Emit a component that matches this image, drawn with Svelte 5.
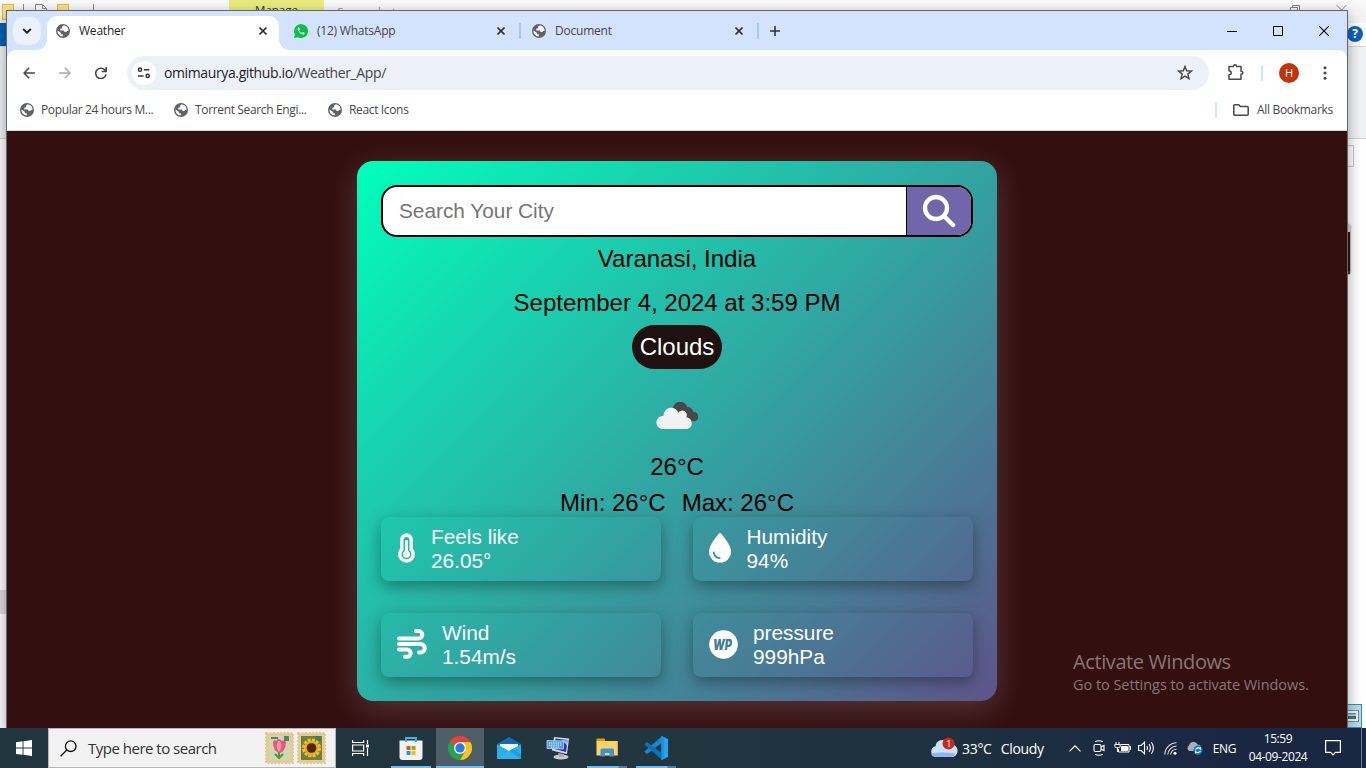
<script>
  const bookmarks = [
    { label: 'Popular 24 hours M...', width: 113 },
    { label: 'Torrent Search Engi...', width: 113 },
    { label: 'React Icons', width: 60 }
  ];
  const tabs = [
    { title: '(12) WhatsApp', icon: 'whatsapp' },
    { title: 'Document', icon: 'globe' }
  ];
  const stats = [
    { icon: 'thermo', label: 'Feels like', value: '26.05°' },
    { icon: 'drop', label: 'Humidity', value: '94%' },
    { icon: 'wind', label: 'Wind', value: '1.54m/s' },
    { icon: 'pressure', label: 'pressure', value: '999hPa' }
  ];
</script>

{#snippet globe()}
  <svg class="globe" width="14" height="14" viewBox="0 0 14 14">
    <circle cx="7" cy="7" r="7" fill="#5f6368" />
    <path d="M7.8 1.3 6 2.8l.2 1.4-2 .6v1.7h3.6l.8 1.6h1.9l.4-1 1.7-.2A5.7 5.7 0 0 0 7.8 1.3Z" fill="#fff" opacity=".95" />
    <path d="M1.4 6.6 4.8 8.8v1.4l2 .1v2.3A5.7 5.7 0 0 1 1.4 6.6Z" fill="#fff" />
  </svg>
{/snippet}

{#snippet cross()}
  <svg class="cross" width="8" height="8" viewBox="0 0 8 8"><path d="m.5.5 7 7m0-7-7 7" fill="none" stroke="currentColor" stroke-width="1.6" /></svg>
{/snippet}

<div class="desktop">
  <div class="explorer">
    <div class="ex-title">
      <i class="fold first"></i><i class="vline"></i>
      <svg width="12" height="12" viewBox="0 0 12 12"><path d="M.5 12V.5h7l4 4V12M7.5.5v4h4" fill="#fafafa" stroke="#888" /></svg>
      <i class="fold"></i><i class="vline late"></i>
      <span class="manage">Manage</span><span class="shots">Screenshots</span>
      <svg class="rest" width="10" height="10" viewBox="0 0 10 10"><path d="M.5 2.500h7v7h-7zM2.500 2.500v-2h7v7h-2" fill="none" stroke="#888" /></svg>
      <svg class="exit" width="11" height="10" viewBox="0 0 11 10"><path d="m.5 0 10 10m0-10-10 10" stroke="#888" /></svg>
    </div>
    <div class="ex-menu"><i class="file"></i><span class="help">?</span></div>
    <div class="ex-ribbon"></div>
    <div class="ex-body"><i class="scroll"></i><i class="box"></i><i class="thumb"></i><i class="view"><b></b></i></div>
  </div>

  <div class="window">
    <div class="tabstrip">
      <div class="tabsearch"><svg width="10" height="6" viewBox="0 0 10 6"><path d="m1.200 1 3.800 3.700L8.800 1" fill="none" stroke="#1f1f1f" stroke-width="1.900" /></svg></div>
      <div class="tab active">{@render globe()}<span>Weather</span>{@render cross()}</div>
      {#each tabs as t}
        <div class="tab">
          {#if t.icon === 'globe'}{@render globe()}{:else}
            <svg class="globe" width="14" height="14" viewBox="0 0 14 14"><path d="m0 14 .9-3.600A7 7 0 1 1 3.700 13.200Z" fill="#0ac143" /><path d="M4.700 3.300c-1.600.6-1.300 2.600.2 4.500 1.700 2.200 4 3.600 5.400 2.200.8-.9.3-1.200-1.200-1.900-.6-.2-.7.900-1.200.800C6.700 8.500 5.700 7.400 5.200 6.400c-.2-.5.800-.8.500-1.500-.3-1-.5-1.600-1-1.600Z" fill="#fff" /></svg>
          {/if}
          <span>{t.title}</span>{@render cross()}
        </div>
        <i class="tabsep"></i>
      {/each}
      <svg class="plus" width="10" height="10" viewBox="0 0 10 10"><path d="M5 0v10M0 5h10" stroke="#333" stroke-width="1.600" /></svg>
      <div class="winbtns">
        <svg width="10" height="10" viewBox="0 0 10 10"><path d="M0 5.500h10" stroke="#000" /></svg>
        <svg width="10" height="10" viewBox="0 0 10 10"><path d="M.5.5h9v9h-9z" fill="none" stroke="#000" /></svg>
        <svg width="10" height="10" viewBox="0 0 10 10"><path d="m0 0 10 10M10 0 0 10" stroke="#000" stroke-width="1.100" /></svg>
      </div>
    </div>

    <div class="toolbar">
      <svg class="nav" width="12" height="12" viewBox="0 0 12 12"><path d="M12 6H1.200M6.200.8 1 6l5.200 5.200" fill="none" stroke="#474747" stroke-width="1.500" /></svg>
      <svg class="nav" width="12" height="12" viewBox="0 0 12 12"><path d="M0 6h10.800M5.800.8 11 6l-5.200 5.200" fill="none" stroke="#ababab" stroke-width="1.500" /></svg>
      <svg class="nav" width="12" height="12" viewBox="0 0 12 12"><path d="M10.500 4A5.200 5.200 0 1 0 11 7.300M11.200 0v4.500H6.700" fill="none" stroke="#474747" stroke-width="1.600" /></svg>
      <div class="omnibox">
        <div class="siteinfo"><svg width="14" height="12" viewBox="0 0 14 12" fill="none" stroke="#333" stroke-width="1.500"><circle cx="3" cy="2.700" r="1.600" /><path d="M6.800 2.700h5.500M1 8.900h5.500" /><circle cx="10.700" cy="8.900" r="1.600" /></svg></div>
        <span class="url">omimaurya.github.io<em>/Weather_App/</em></span>
        <svg class="star" width="16" height="16" viewBox="0 0 16 16"><path d="m8 1.500 1.700 4.300 4.700.3-3.600 3 1.200 4.500L8 11.100l-4 2.500 1.200-4.500-3.600-3 4.700-.3Z" fill="none" stroke="#474747" stroke-width="1.400" /></svg>
      </div>
      <svg class="ext" width="18" height="17" viewBox="0 0 18 17"><path d="M2 2.500h4.500c.1-2.200 3-2.200 3.100 0H14v4.700c2.500.1 2.500 3 0 3.100v5H2v-4.200c3-.5 3-4 0-4.400Z" fill="none" stroke="#474747" stroke-width="1.500" stroke-linejoin="round" /></svg>
      <i class="sep"></i>
      <div class="avatar">H</div>
      <svg class="dots" width="4" height="14" viewBox="0 0 4 14" fill="#474747"><circle cx="2" cy="1.800" r="1.500" /><circle cx="2" cy="7" r="1.500" /><circle cx="2" cy="12.200" r="1.500" /></svg>
    </div>

    <div class="bookmarks">
      {#each bookmarks as b}
        <div class="bm">{@render globe()}<span style="width: {b.width}px">{b.label}</span></div>
      {/each}
      <i class="sep"></i>
      <svg width="16" height="12" viewBox="0 0 16 12"><path d="M.8 1.700q0-.9.900-.9h4l1.600 1.700h7q.9 0 .9.900v6.900q0 .9-.9.900H1.700q-.9 0-.9-.9Z" fill="none" stroke="#474747" stroke-width="1.500" /></svg>
      <span class="allbm">All Bookmarks</span>
    </div>

    <main>
      <div class="card">
        <div class="search">
          <span>Search Your City</span>
          <button aria-label="Search"><svg width="34" height="34" viewBox="0 0 34 34"><circle cx="14" cy="14" r="11" fill="none" stroke="#fff" stroke-width="4.300" /><path d="m22 22 9 9" stroke="#fff" stroke-width="4.500" stroke-linecap="round" /></svg></button>
        </div>
        <p class="city">Varanasi, India</p>
        <p class="date">September 4, 2024 at 3:59 PM</p>
        <p class="pill">Clouds</p>
        <svg class="cloud" width="42" height="27" viewBox="0.7 0.3 40 26.200" preserveAspectRatio="none">
          <path d="M17 9a7 7 0 0 1 13.500-3.800 5 5 0 0 1 5.500 4.500 4.800 4.800 0 0 1 1.800 9.300H25Z" fill="#484848" />
          <path d="M6.500 26.500A6.500 6.500 0 0 1 8 13.600 7.200 7.200 0 0 1 22 10.700a4.300 4.300 0 0 1 7.500 4.300 5.900 5.900 0 0 1 1 11.500Z" fill="#f2f2f2" />
        </svg>
        <p class="temp">26°C</p>
        <p class="range"><span>Min: 26°C</span><span>Max: 26°C</span></p>
        <div class="stats">
          {#each stats as s}
            <div class="stat">
              {#if s.icon === 'thermo'}
                <svg width="19" height="30" viewBox="-.5 0 19 30"><path d="M2.700 6.500a6.300 6.300 0 0 1 12.600 0v9a8.500 8.500 0 1 1-12.600 0Z" fill="#fff" /><path d="M6 7a3 3 0 0 1 6 0v10.300a5 5 0 1 1-6 0Z" fill="#27b5a5" /><path d="M9 8.500v12" stroke="#fff" stroke-width="2.800" stroke-linecap="round" /><circle cx="9" cy="21.300" r="3.500" fill="#fff" /></svg>
              {:else if s.icon === 'drop'}
                <svg width="22.500" height="30" viewBox="0 0 22.500 30"><path d="M9.700.8q1.300-1.600 2.600 0C16.500 6 22 13.200 22 18.600A11 11 0 0 1 0 18.600C0 13.200 5.500 6 9.700.8Z" fill="#fff" /><path d="M4.700 19.500q.8 5.100 6 5.600" fill="none" stroke="#3d9098" stroke-width="1.800" stroke-linecap="round" /></svg>
              {:else if s.icon === 'wind'}
                <svg width="30" height="30" viewBox="0 0 30 30" fill="none" stroke="#fff" stroke-width="4" stroke-linecap="round"><path d="M2 9.500h19.500a3.700 3.700 0 0 0 0-7.500h-2.700M2 15h21.500a4.200 4.200 0 0 1 0 8.500H22M2 20.500h8a3.500 3.500 0 0 1 0 7.300H8" /></svg>
              {:else}
                <svg class="badge" width="29" height="29" viewBox="0 0 29 29"><circle cx="14.500" cy="14.500" r="14.300" fill="#fff" /><text x="4" y="19.700" textLength="19" lengthAdjust="spacingAndGlyphs" font-family="Inter, sans-serif" font-size="14.500" font-style="italic" font-weight="900" fill="#457f97">WP</text></svg>
              {/if}
              <div>{s.label}<br />{s.value}</div>
            </div>
          {/each}
        </div>
      </div>
    </main>
  </div>

  <div class="watermark"><b>Activate Windows</b><span>Go to Settings to activate Windows.</span></div>

  <div class="taskbar">
    <div class="start"><svg width="16" height="16" viewBox="0 0 16 16" fill="#fff"><path d="M0 2.200 6.600 1.300v6.300H0zM7.500 1.200 16 0v7.600H7.500zM0 8.500h6.600v6.300L0 13.900zM7.500 8.500H16V16l-8.500-1.200z" /></svg></div>
    <div class="tsearch">
      <svg width="17" height="17" viewBox="0 0 17 17" fill="none" stroke="#111" stroke-width="1.300"><circle cx="10.700" cy="6.200" r="5.300" /><path d="m6.800 10-6.200 6.300" /></svg>
      <span>Type here to search</span>
      <svg class="stamps" width="62" height="34" viewBox="0 0 62 34">
        <rect x="1" y="2" width="27" height="30" fill="#e8c994" stroke="#e8c994" stroke-width="2" stroke-dasharray="2 1.500" />
        <rect x="4" y="5" width="21" height="24" fill="#cbd8b4" /><path d="M6 7h7" stroke="#38916a" stroke-width="2" /><rect x="19" y="5" width="5" height="5" fill="#488b6c" />
        <path d="M14 19v9m0-1-4-4m4 4 4-4" fill="none" stroke="#4b9838" stroke-width="2" /><path d="M8 11q1-3 3-1 2-4 6 0 3-2 4 1 0 9-6 11-7-1-7-11Z" fill="#ed5576" /><path d="M13 10q-3 6 1 11 4-6 1-11" fill="#ff9aab" />
        <rect x="33" y="2" width="27" height="30" fill="#e8c994" stroke="#e8c994" stroke-width="2" stroke-dasharray="2 1.500" />
        <rect x="36" y="5" width="21" height="24" fill="#69833e" /><rect x="51" y="5" width="5" height="5" fill="#3c8067" />
        <circle cx="46.500" cy="17" r="7.500" fill="#e5a51d" /><circle cx="46.500" cy="17" r="8" fill="none" stroke="#f3bd2d" stroke-width="3" stroke-dasharray="3 1.200" /><circle cx="46.500" cy="17" r="4.800" fill="#512311" />
      </svg>
    </div>
    <div class="tb taskview"><svg width="18" height="16" viewBox="0 0 18 16" fill="none" stroke="#fff" stroke-width="1.200"><path d="M.6 0v2.500h11V0M.6 5h11v6H.6zM.6 16v-2.500h11V16M15.500 0v4M15.500 8v8" /><path d="M14 4.500h3v3h-3z" fill="#fff" stroke="none" /></svg></div>
    <div class="tb open"><svg width="24" height="24" viewBox="0 0 24 24"><path d="M7 6V2h10v4" fill="none" stroke="#38bff0" stroke-width="1.800" /><path d="M.5 4.500h23V21q0 3-3 3h-17q-3 0-3-3Z" fill="#f2f2f2" /><path d="M7 6V2.500M17 6V2.500" stroke="#1aa3df" stroke-width="1.500" /><path fill="#f04e23" d="M7.500 10h4v4h-4z" /><path fill="#7fb900" d="M12.500 10h4v4h-4z" /><path fill="#0aa3ee" d="M7.500 15h4v4h-4z" /><path fill="#fdb900" d="M12.500 15h4v4h-4z" /></svg></div>
    <div class="tb current"><svg width="24" height="24" viewBox="0 0 24 24"><path d="M12 12 1.600 6A12 12 0 0 1 22.400 6Z" fill="#e54335" /><path d="M12 12 1.600 6A12 12 0 0 0 12 24l5.200-9Z" fill="#2ba24c" /><path d="M12 6h10.400A12 12 0 0 1 12 24l5.200-9Z" fill="#fcc31e" /><circle cx="12" cy="12" r="6" fill="#fff" /><circle cx="12" cy="12" r="4.700" fill="#2b79e5" /></svg></div>
    <div class="tb"><svg width="24" height="22" viewBox="0 0 24 22"><path d="M0 7 12 0l12 7v4H0Z" fill="#1468b8" /><path d="M3 7h18v8H3Z" fill="#f3f7fa" /><path d="M0 7.200 12 14 24 7.200V22H0Z" fill="#29b0ec" /><path d="M0 22 16 11.700 24 17v5Z" fill="#1ba0e1" /><path d="M0 22 12 14l12 8Z" fill="#43c8f5" opacity=".5" /></svg></div>
    <div class="tb"><svg width="24" height="24" viewBox="0 0 24 24"><ellipse cx="15" cy="21" rx="7.500" ry="2.500" fill="#ccc" /><path d="m12 17 6 1v3h-5Z" fill="#aaa" /><path d="M8 1 23 2.500 21 18 6 14.500Z" fill="#ddd" /><path d="M9.500 2.500 21.500 4 20 16 8 13Z" fill="#2034c9" /><path d="m16 4 5.500.5-.5 5Z" fill="#a5b3ff" /><path d="M1 4.500 17.500 5v8L1 12.500Z" fill="#4aa0e2" stroke="#d8e8f5" stroke-width=".7" /><path d="M3 7h13M3 9.200h13M5 11.200h8" stroke="#fff" stroke-width="1" stroke-dasharray="1.200 1" /></svg></div>
    <div class="tb open multi"><svg width="22" height="20" viewBox="0 0 22 20"><path d="M.5 1.500q0-1 1-1H8q1 0 1 1V4H.5Z" fill="#e09b0c" /><path d="M.5 3H21q.8 0 .8.800v13.700H.5Z" fill="#fcd362" /><path d="M4.500 18.500V12q0-1.500 1.500-1.500h10.500q1.500 0 1.500 1.500v6.500h-4.500V15H9v3.500Z" fill="#3b93da" /></svg></div>
    <div class="tb open multi"><svg width="24" height="24" viewBox="0 0 24 24"><path d="M17.500 0 24 3v18l-6.500 3Z" fill="#27a5ee" /><path d="M18 .2v6.500L3 18 .2 15.700Z" fill="#118bd5" /><path d="M18 23.800v-6.500L3 6 .2 8.300Z" fill="#0874ba" /><path d="M17.500 0v24l2.800-1.300V1.300Z" fill="#1e96df" /></svg></div>

    <div class="weather"><svg width="28" height="22" viewBox="0 0 28 22"><path d="M6 20a5.500 5.500 0 0 1-.5-10.800A7 7 0 0 1 19 7.500a5 5 0 0 1 4 12.500Z" fill="#cfe0ff" /><path d="M1 16.500q10-2 24 0A4.500 4.500 0 0 1 21 20H6q-4 0-5-3.500Z" fill="#8eb3ef" /><circle cx="18.500" cy="6.500" r="6" fill="#c42b1c" /><text x="16.300" y="10" fill="#fff" font-family="Open Sans, sans-serif" font-size="9">1</text></svg><span>33°C</span><span class="cond">Cloudy</span></div>
    <div class="tray">
      <svg width="12" height="7" viewBox="0 0 12 7"><path d="m.5 6.300 5.500-5.500 5.500 5.500" fill="none" stroke="#fff" stroke-width="1.200" /></svg>
      <svg width="12" height="16" viewBox="0 0 12 16" fill="none" stroke="#fff" stroke-width="1.100"><rect x="1" y="4.500" width="7" height="7" rx="1.500" /><path d="m8 7 3-1.500v5L8 9M2 1.800q4-2 8 0M2 14.200q4 2 8 0" /></svg>
      <svg width="17" height="12" viewBox="0 0 17 12" fill="none" stroke="#fff"><path d="M6.500 2.500h8.500v7.500H4.500V7M15.500 4.500h1v3h-1M2 0v2.500M5 0v2.500M.8 2.500h5.400v1.700q0 1.500-1.700 1.500H2.500Q.8 5.700.8 4.200ZM3.500 6v4" /><path d="M7.500 4.500h6v4h-6Z" fill="#fff" /></svg>
      <svg width="17" height="14" viewBox="0 0 17 14" fill="none" stroke="#fff" stroke-width="1.100"><path d="M.6 4.500h2.600L6.500 1.200v11.600L3.200 9.500H.6ZM8.800 5q1.300 2 0 4M11 3q2.800 4 0 8M13.400 1.200q4 5.800 0 11.600" /></svg>
      <svg width="13" height="13" viewBox="0 0 13 13" fill="none" stroke="#ddd" stroke-width="1.100"><path d="M.8 12.500A12 12 0 0 1 12.500.8M3.800 12.500A9 9 0 0 1 12.500 4M6.700 12.500a6 6 0 0 1 5.800-5.300" /><circle cx="11" cy="11.200" r="1.500" fill="#fff" stroke="none" /></svg>
      <svg width="17" height="14" viewBox="0 0 17 14"><path d="M3.500 10A3 3 0 0 1 3 4.500a4.500 4.500 0 0 1 8.500-1A3.500 3.500 0 0 1 15 7v3Z" fill="#aaaeb5" /><circle cx="12" cy="9.200" r="4.600" fill="#1376c9" /><path d="M9.500 8.500q2.500-3 4.800-.5V6M14.500 10q-2.500 3-4.800.5v2" fill="none" stroke="#fff" stroke-width="1.100" /></svg>
    </div>
    <span class="lang">ENG</span>
    <div class="clock"><span>15:59</span><span>04-09-2024</span></div>
    <svg class="note" width="16" height="16" viewBox="0 0 16 16"><path d="M.6.6h14.800v11.800h-5L8 14.800l-2.400-2.400h-5Z" fill="none" stroke="#fff" stroke-width="1.200" /></svg>
    <i class="peek"></i>
  </div>
</div>

<style>
  :global(body) { margin: 0; overflow: hidden; }
  .desktop { position: relative; width: 1366px; height: 768px; overflow: hidden; background: #fff; font-family: "Open Sans", "Noto Sans", sans-serif; }
  .desktop * { box-sizing: border-box; }
  svg { display: block; flex: none; }
  i, em { font-style: normal; }

  .explorer { height: 728px; display: flex; flex-direction: column; }
  .ex-title { height: 23px; display: flex; align-items: flex-start; padding-top: 4px; background: linear-gradient(#fbfbfb, #f4f4f4 10px); }
  .ex-title > svg { margin-left: 11px; }
  .fold { width: 12px; height: 16px; margin-left: 10px; background: #fbe089; border: 1px solid #e2b94a; }
  .fold.first { margin-left: 2px; }
  .vline { width: 1px; height: 8px; margin-left: 9px; background: #888; }
  .vline.late { margin-left: 24px; }
  .manage { width: 95px; height: 19px; margin: -4px 0 0 135px; padding-top: 3px; background: #e9eb7f; text-align: center; font-size: 11.500px; line-height: 14px; color: #333; }
  .shots { margin: 1px 0 0 13px; font-size: 12px; line-height: 15px; color: #999; letter-spacing: -.4px; }
  .ex-title > .rest { margin: 1px 0 0 auto; }
  .ex-title > .exit { margin: 1px 19px 0 36px; }
  .ex-menu { height: 24px; display: flex; justify-content: space-between; align-items: center; border-bottom: 1px solid #d5d5d5; }
  .file { width: 40px; height: 23px; background: #0063b1; }
  .help { width: 16px; height: 16px; margin: 0 3px 2px 0; border-radius: 50%; background: #0a64bd; color: #fff; font: bold 12px/16px "Open Sans", sans-serif; text-align: center; }
  .ex-ribbon { height: 92px; background: #f1f2f4; border-bottom: 1px solid #d2d2d2; }
  .ex-body { flex: 1; display: flex; flex-direction: column; align-items: flex-end; position: relative; }
  .box { width: 30px; height: 22px; margin: 6px 12px 0 0; border: 1px solid #ccc; }
  .thumb { width: 30px; height: 49px; margin: 58px 16px 0 0; background: #340f10; border-top: 7px solid #cdd9ef; border-bottom: 3px solid #203a5b; box-shadow: 0 0 2px #555; }
  .view { width: 30px; height: 24px; margin: auto 4px 0 0; padding: 6px 3px 6px 6px; background: #b9dbe9; border: 1px solid #2793c7; }
  .view b { display: block; height: 10px; background: linear-gradient(#4c8bc9, #d2e5f2 50%, #3e7970 55%); border: 2px solid #f6f6f6; outline: 1px solid #888; }
  .scroll { position: absolute; left: 0; top: 451px; width: 7px; height: 24px; background: #ddd; }

  .window { position: absolute; left: 6px; top: 10px; width: 1342px; height: 719px; border: 1px solid #66666c; background: #fff; box-shadow: 0 5px 14px rgba(0, 0, 0, .36); display: flex; flex-direction: column; }
  .tabstrip { height: 39px; flex: none; display: flex; align-items: center; padding-left: 6px; background: #d3e2fd; }
  .tabsearch { width: 28px; height: 28px; margin-right: 6px; border-radius: 10px; background: #ebf1fe; display: grid; place-items: center; }
  .tab { width: 232px; height: 34px; display: flex; align-items: center; padding: 0 12px 5px 9px; font-size: 12px; color: #474747; margin-right: 2px; }
  .tab.active { align-self: flex-end; position: relative; background: #fff; border-radius: 10px 10px 0 0; color: #1f1f1f; margin-right: 6px; }
  .tab.active::before, .tab.active::after { content: ""; position: absolute; bottom: 0; width: 10px; height: 10px; }
  .tab.active::before { left: -10px; background: radial-gradient(circle at 0 0, transparent 9.500px, #fff 10px); }
  .tab.active::after { right: -10px; background: radial-gradient(circle at 100% 0, transparent 9.500px, #fff 10px); }
  .tab:not(.active) { padding-bottom: 0; }
  .tab span { margin-left: 9px; letter-spacing: -.22px; line-height: 16px; }
  .cross { margin-left: auto; color: #333; }
  .tabsep { width: 2px; height: 16px; background: #a8c7fa; margin-right: 2px; }
  .plus { margin-left: 9px; }
  .winbtns { margin-left: auto; display: flex; gap: 36px; padding-right: 18px; }
  .toolbar { height: 45px; flex: none; display: flex; align-items: center; padding-left: 16px; background: radial-gradient(circle at 8px 8px, #fff 7.500px, #d3e2fd 8px) 0 0 / 8px 8px no-repeat, radial-gradient(circle at 0 8px, #fff 7.500px, #d3e2fd 8px) 100% 0 / 8px 8px no-repeat, #fff; }
  .nav { margin-right: 24px; }
  .omnibox { width: 1082px; height: 34px; margin: 0 18px 0 -4px; padding: 0 16px 0 5px; border-radius: 17px; background: #ecf0f9; display: flex; align-items: center; }
  .siteinfo { width: 24px; height: 24px; border-radius: 50%; background: #fff; display: grid; place-items: center; }
  .url { margin-left: 8px; font-size: 14px; letter-spacing: -.38px; color: #1f1f1f; }
  .url em { color: #474747; }
  .star { margin-left: auto; }
  .sep { width: 2px; height: 16px; background: #d3e2fd; }
  .toolbar .sep { margin: 0 16px 0 16px; }
  .avatar { width: 20px; height: 20px; border-radius: 50%; background: #c1350c; color: #fff; font-size: 11px; line-height: 20px; text-align: center; }
  .dots { margin-left: 24px; }
  .bookmarks { height: 36px; flex: none; display: flex; align-items: center; padding: 0 14px 6px 13px; border-bottom: 1px solid #d9d9d9; font-size: 12px; color: #474747; }
  .bm { display: flex; align-items: center; margin-right: 20px; }
  .bm span { margin-left: 7px; white-space: nowrap; letter-spacing: -.35px; }
  .bookmarks .sep { margin: 0 16px 0 auto; }
  .allbm { margin-left: 8px; letter-spacing: -.3px; }

  main { flex: 1; padding-top: 30px; background: #340f10; font-family: "Liberation Sans", Arial, sans-serif; overflow: hidden; }
  .card { width: 640px; height: 540px; margin: 0 auto; padding: 24px; border-radius: 16px; background: linear-gradient(135deg, #00ffbc, #5e548a); box-shadow: 0 8px 32px rgba(255, 255, 255, .17); display: flex; flex-direction: column; align-items: center; font-size: 24px; line-height: 28px; color: #000; }
  .card p { margin: 0; }
  .search { width: 592px; height: 52px; flex: none; border: 2px solid #000; border-radius: 16px; background: #fff; overflow: hidden; display: flex; align-items: center; padding-left: 16px; font-size: 20.800px; color: #757575; }
  .search button { width: 65px; height: 48px; margin-left: auto; padding: 0; border: 0; border-left: 1px solid #000; background: #7166a9; display: grid; place-items: center; }
  .card .city { margin-top: 8px; }
  .card .date { margin-top: 16px; }
  .card .pill { margin-top: 8px; padding: 8px; border-radius: 22px; background: #1e1110; color: #fff; }
  .cloud { margin-top: 33px; }
  .card .temp { margin-top: 24px; }
  .card .range { margin-top: 8px; display: flex; gap: 16px; }
  .stats { width: 592px; display: grid; grid-template-columns: 280px 280px; gap: 32px; }
  .stat { height: 64px; display: flex; align-items: center; gap: 15px; padding: 0 16px; border-radius: 8px; font-size: 20.800px; line-height: 24px; color: #fff; box-shadow: 0 5px 15px rgba(0, 0, 0, .35); }
  .stat svg { margin-top: -2px; }
  .badge { overflow: visible; }

  .watermark { position: absolute; left: 1073px; top: 650px; display: flex; flex-direction: column; color: rgba(180, 170, 170, .68); white-space: nowrap; }
  .watermark b { font-weight: 400; font-size: 20px; line-height: 24px; letter-spacing: -.4px; }
  .watermark span { font-size: 14.500px; line-height: 22px; letter-spacing: -.05px; }

  .taskbar { position: absolute; left: 0; top: 728px; width: 1366px; height: 40px; display: flex; align-items: center; background: linear-gradient(90deg, #20353e, #21363f 50%, #1c3040 72%, #1a2742 90%); color: #fff; }
  .start { width: 48px; display: grid; place-items: center; }
  .tsearch { width: 288px; height: 40px; border: 1px solid #b6b6b6; background: #f2f2f2; display: flex; align-items: center; padding: 0 8px 0 11px; color: #333; font-size: 15px; letter-spacing: -.5px; margin-right: 1px; }
  .tsearch span { margin-left: 11px; }
  .stamps { margin-left: auto; }
  .tb { position: relative; width: 48px; height: 40px; margin-right: 1px; display: grid; place-items: center; }
  .taskview { margin-right: 2px; padding-right: 1px; }
  .tb.current { background: #4e5e66; border-bottom: 2px solid #76b9ed; padding-top: 2px; }
  .tb.open::after { content: ""; position: absolute; left: 4px; right: 4px; bottom: 0; height: 2px; background: #76b9ed; }
  .tb.multi::after { background: linear-gradient(90deg, #76b9ed 31px, #527f9d 32px); }
  .weather { margin-left: auto; display: flex; align-items: center; font-size: 14px; letter-spacing: -.3px; }
  .weather span { margin-left: 4px; }
  .weather .cond { margin-left: 9px; }
  .tray { display: grid; grid-template-columns: repeat(6, 24px); place-items: center; margin-left: 19px; }
  .lang { margin-left: 6px; font-size: 12px; letter-spacing: -.4px; }
  .clock { width: 60px; margin-left: 12px; display: flex; flex-direction: column; align-items: center; font-size: 12px; line-height: 18px; letter-spacing: -.4px; white-space: nowrap; }
  .note { margin-left: 17px; }
  .peek { width: 1px; height: 40px; margin: 0 4px 0 20px; background: #66758a; }
</style>
